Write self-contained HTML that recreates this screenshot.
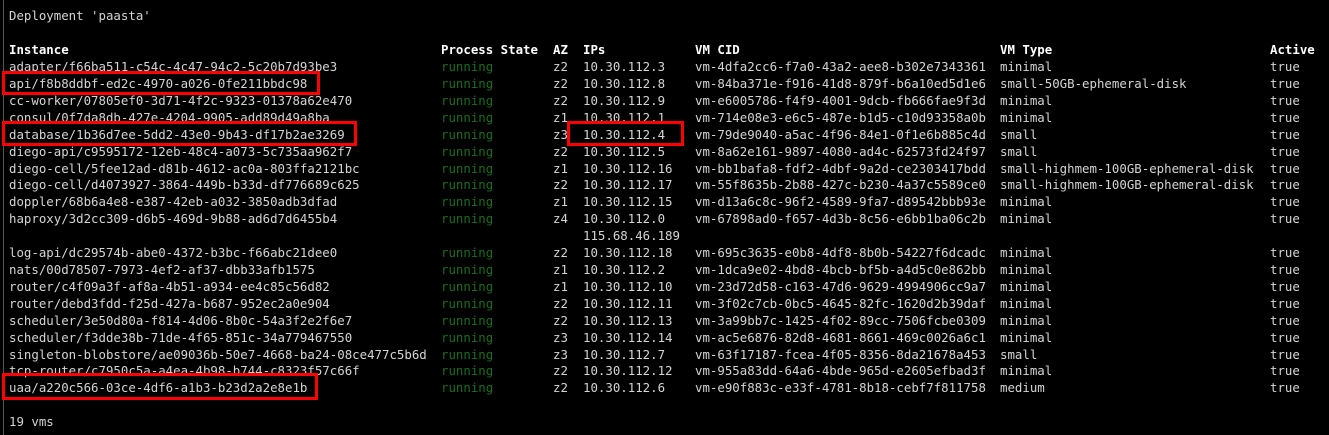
<!DOCTYPE html>
<html><head><meta charset="utf-8"><style>
html,body{margin:0;padding:0;background:#000;width:1329px;height:435px;overflow:hidden}
body{position:relative;font-family:"DejaVu Sans Mono","Liberation Mono",monospace;font-size:12.4px;color:#d4d4d4}
.c{position:absolute;top:8.4px;white-space:pre;line-height:16.9px}
.g{color:#1e6b1e}
b{color:#fff}
.lb{position:absolute;left:3px;top:0;width:1px;height:435px;background:#555}
.r{position:absolute;border:3px solid #f00;box-sizing:border-box}
</style></head><body>
<div class="lb"></div>
<div class="c" style="left:9px">Deployment 'paasta'

<b>Instance</b>
adapter/f66ba511-c54c-4c47-94c2-5c20b7d93be3
api/f8b8ddbf-ed2c-4970-a026-0fe211bbdc98
cc-worker/07805ef0-3d71-4f2c-9323-01378a62e470
consul/0f7da8db-427e-4204-9905-add89d49a8ba
database/1b36d7ee-5dd2-43e0-9b43-df17b2ae3269
diego-api/c9595172-12eb-48c4-a073-5c735aa962f7
diego-cell/5fee12ad-d81b-4612-ac0a-803ffa2121bc
diego-cell/d4073927-3864-449b-b33d-df776689c625
doppler/68b6a4e8-e387-42eb-a032-3850adb3dfad
haproxy/3d2cc309-d6b5-469d-9b88-ad6d7d6455b4

log-api/dc29574b-abe0-4372-b3bc-f66abc21dee0
nats/00d78507-7973-4ef2-af37-dbb33afb1575
router/c4f09a3f-af8a-4b51-a934-ee4c85c56d82
router/debd3fdd-f25d-427a-b687-952ec2a0e904
scheduler/3e50d80a-f814-4d06-8b0c-54a3f2e2f6e7
scheduler/f3dde38b-71de-4f65-851c-34a779467550
singleton-blobstore/ae09036b-50e7-4668-ba24-08ce477c5b6d
tcp-router/c7950c5a-a4ea-4b98-b744-c8323f57c66f
uaa/a220c566-03ce-4df6-a1b3-b23d2a2e8e1b

19 vms</div>
<div class="c" style="left:441px">

<b>Process State</b>
<span class="g">running
running
running
running
running
running
running
running
running
running

running
running
running
running
running
running
running
running
running</span></div>
<div class="c" style="left:553px">

<b>AZ</b>
z2
z2
z2
z1
z3
z2
z1
z2
z1
z4

z2
z1
z1
z2
z2
z3
z3
z2
z2</div>
<div class="c" style="left:583px">

<b>IPs</b>
10.30.112.3
10.30.112.8
10.30.112.9
10.30.112.1
10.30.112.4
10.30.112.5
10.30.112.16
10.30.112.17
10.30.112.15
10.30.112.0
115.68.46.189
10.30.112.18
10.30.112.2
10.30.112.10
10.30.112.11
10.30.112.13
10.30.112.14
10.30.112.7
10.30.112.12
10.30.112.6</div>
<div class="c" style="left:695px">

<b>VM CID</b>
vm-4dfa2cc6-f7a0-43a2-aee8-b302e7343361
vm-84ba371e-f916-41d8-879f-b6a10ed5d1e6
vm-e6005786-f4f9-4001-9dcb-fb666fae9f3d
vm-714e08e3-e6c5-487e-b1d5-c10d93358a0b
vm-79de9040-a5ac-4f96-84e1-0f1e6b885c4d
vm-8a62e161-9897-4080-ad4c-62573fd24f97
vm-bb1bafa8-fdf2-4dbf-9a2d-ce2303417bdd
vm-55f8635b-2b88-427c-b230-4a37c5589ce0
vm-d13a6c8c-96f2-4589-9fa7-d89542bbb93e
vm-67898ad0-f657-4d3b-8c56-e6bb1ba06c2b

vm-695c3635-e0b8-4df8-8b0b-54227f6dcadc
vm-1dca9e02-4bd8-4bcb-bf5b-a4d5c0e862bb
vm-23d72d58-c163-47d6-9629-4994906cc9a7
vm-3f02c7cb-0bc5-4645-82fc-1620d2b39daf
vm-3a99bb7c-1425-4f02-89cc-7506fcbe0309
vm-ac5e6876-82d8-4681-8661-469c0026a6c1
vm-63f17187-fcea-4f05-8356-8da21678a453
vm-955a83dd-64a6-4bde-965d-e2605efbad3f
vm-e90f883c-e33f-4781-8b18-cebf7f811758</div>
<div class="c" style="left:1000px">

<b>VM Type</b>
minimal
small-50GB-ephemeral-disk
minimal
minimal
small
small
small-highmem-100GB-ephemeral-disk
small-highmem-100GB-ephemeral-disk
minimal
minimal

minimal
minimal
minimal
minimal
minimal
minimal
small
minimal
medium</div>
<div class="c" style="left:1270px">

<b>Active</b>
true
true
true
true
true
true
true
true
true
true

true
true
true
true
true
true
true
true
true</div>
<div class="r" style="left:2px;top:71px;width:318px;height:24px"></div>
<div class="r" style="left:2px;top:121px;width:355px;height:25px"></div>
<div class="r" style="left:567px;top:121px;width:117px;height:25px"></div>
<div class="r" style="left:2px;top:373px;width:316px;height:27px"></div>
</body></html>
